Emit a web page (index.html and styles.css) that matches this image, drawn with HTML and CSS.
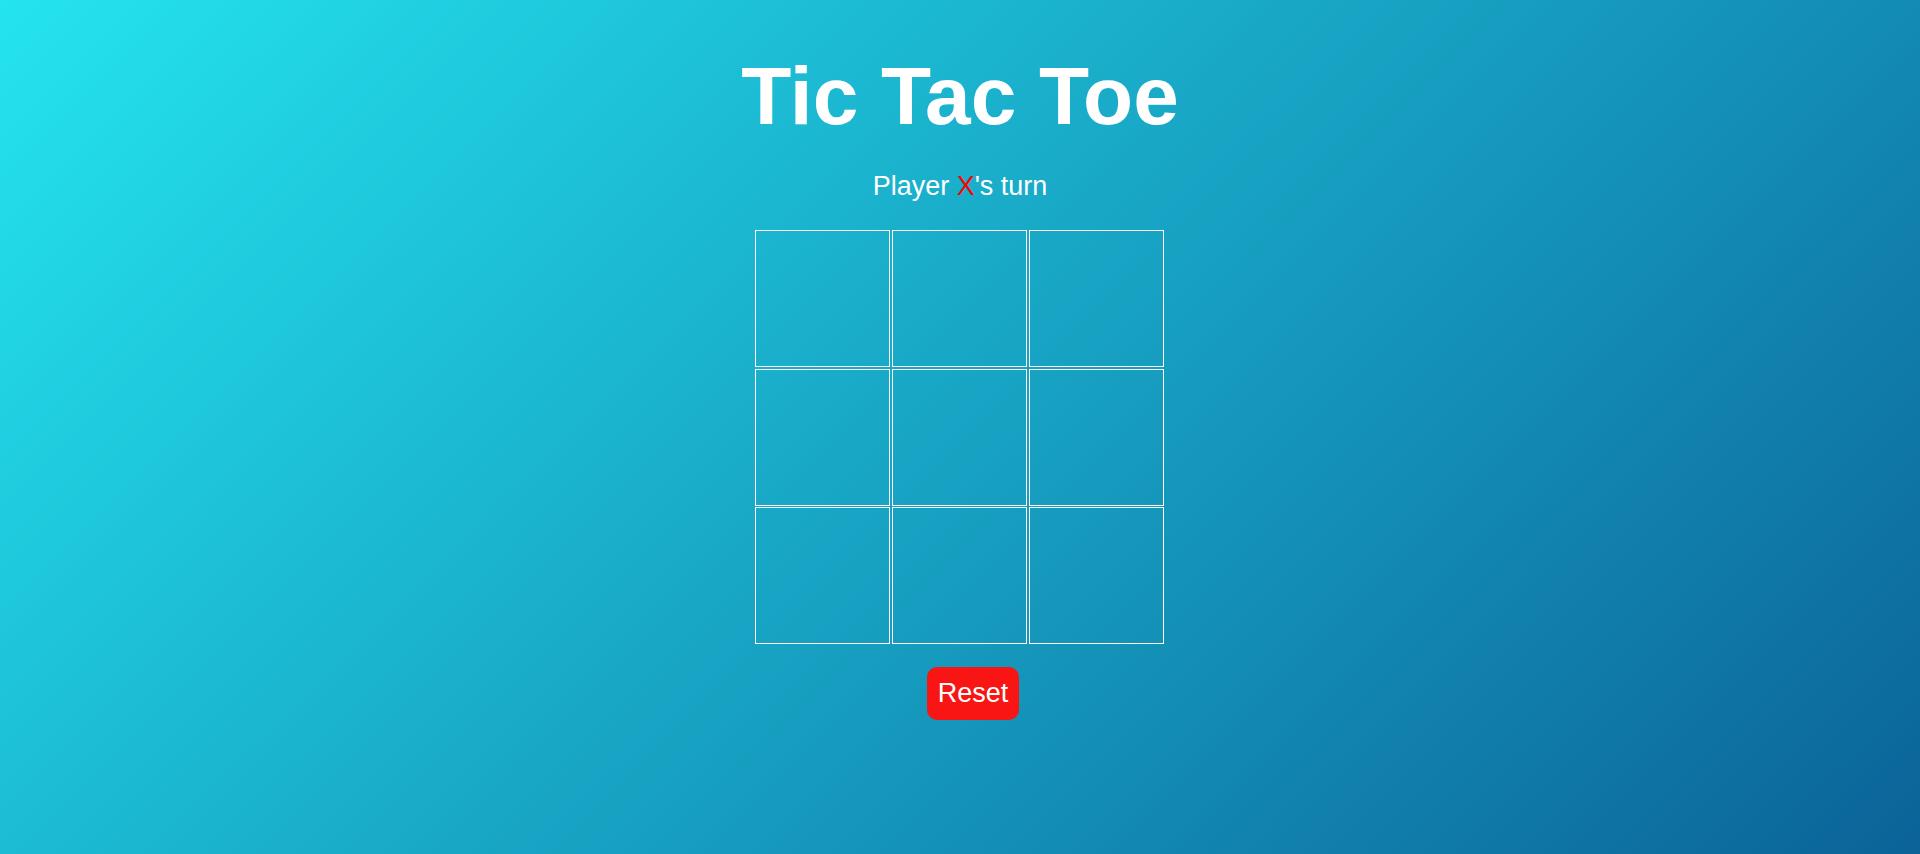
FILE: index.html
```html
<!DOCTYPE html>
<html lang="en">
<head>
<meta charset="utf-8">
<title>Tic Tac Toe</title>
<link rel="stylesheet" href="styles.css">
</head>
<body>
<main class="game">
  <h1 class="title">Tic Tac Toe</h1>
  <p class="status">Player <span class="player-x">X</span>'s turn</p>
  <div class="board">
    <div class="cell"></div>
    <div class="cell"></div>
    <div class="cell"></div>
    <div class="cell"></div>
    <div class="cell"></div>
    <div class="cell"></div>
    <div class="cell"></div>
    <div class="cell"></div>
    <div class="cell"></div>
  </div>
  <div class="controls">
    <button class="reset" type="button">Reset</button>
  </div>
</main>
</body>
</html>
```

FILE: styles.css
```css
html, body {
  margin: 0;
  padding: 0;
  height: 100%;
}

body {
  font-family: "Liberation Sans", Arial, sans-serif;
  color: #ffffff;
  background: linear-gradient(135deg, #24e4ef 0%, #0b6398 100%);
  background-attachment: fixed;
  min-height: 854px;
}

.game {
  display: flex;
  flex-direction: column;
  align-items: center;
  padding-top: 50px;
}

.title {
  margin: 0 0 29px;
  font-size: 82px;
  font-weight: bold;
  line-height: 92px;
}

.status {
  margin: 0 0 28px;
  font-size: 27px;
  line-height: 31px;
}

.player-x {
  color: #ff0000;
}

.board {
  display: grid;
  grid-template-columns: repeat(3, 1fr);
  grid-template-rows: repeat(3, 1fr);
  gap: 1.5px;
  width: 409px;
  height: 414px;
  margin: 0 1px 23px 0;
}

.cell {
  border: 1px solid #ffffff;
}

.controls {
  display: flex;
  justify-content: center;
}

.reset {
  margin-left: 26px;
  width: 92px;
  height: 53px;
  padding: 0;
  border: none;
  border-radius: 10px;
  background: #f91513;
  color: #ffffff;
  font-family: "Liberation Sans", Arial, sans-serif;
  font-size: 27px;
  cursor: pointer;
}
```
